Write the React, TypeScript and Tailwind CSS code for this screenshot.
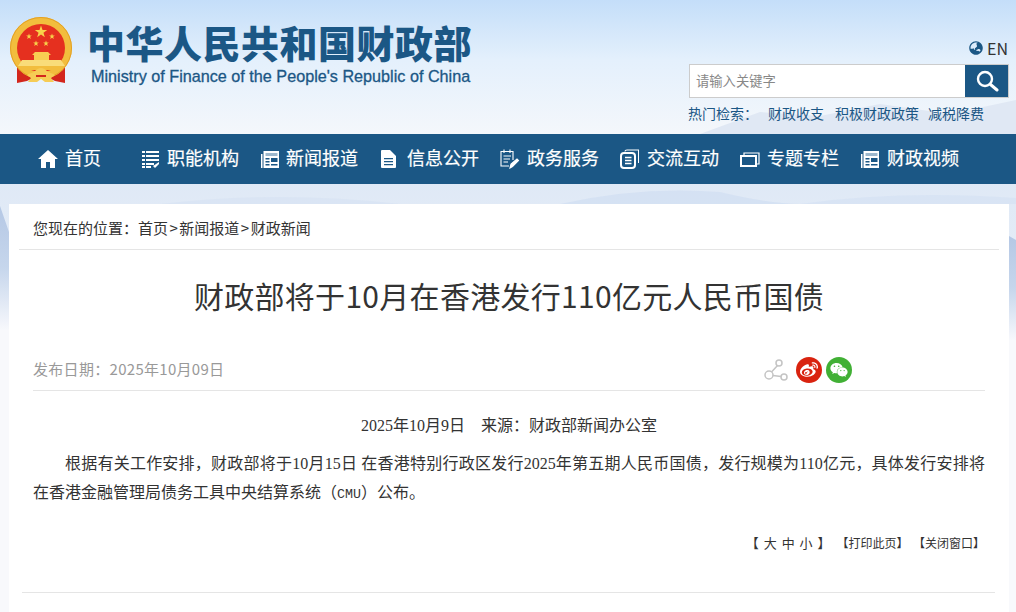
import React from "react";
import { FaWeibo, FaWeixin, FaGlobeAsia } from "react-icons/fa";

const sans = { fontFamily: '"Noto Sans CJK SC", sans-serif' };

const Star = ({ cx, cy, r, fill = "#f8d24a" }: { cx: number; cy: number; r: number; fill?: string }) => {
  const points = Array.from({ length: 10 }, (_, i) => {
    const radius = i % 2 === 0 ? r : r * 0.4;
    const angle = (Math.PI / 5) * i - Math.PI / 2;
    return `${cx + radius * Math.cos(angle)},${cy + radius * Math.sin(angle)}`;
  }).join(" ");
  return <polygon points={points} fill={fill} />;
};

const Emblem = () => (
  <svg width="64" height="68" viewBox="0 0 64 68">
    <path d="M10 44 L8 50 L8 66 L18 64 L26 60 L38 60 L46 64 L56 66 L56 50 L54 44 Z" fill="#d3261c" />
    <circle cx="32" cy="31" r="31" fill="#f2bd3d" />
    <circle cx="32" cy="31" r="30.500" fill="none" stroke="#e3a025" strokeWidth="1" />
    <circle cx="32" cy="31" r="24" fill="#e5301f" />
    <Star cx={32} cy={15} r={6.500} />
    <Star cx={20} cy={19.500} r={3} />
    <Star cx={43} cy={19.500} r={3} />
    <Star cx={27} cy={26.500} r={3} />
    <Star cx={37} cy={26.500} r={3} />
    <path d="M26 35h13l3 3h-2v5h-15v-5h-2z" fill="#f8cf52" />
    <path d="M13 43h39l4 6H9z" fill="#f9dc79" />
    <path d="M9 49h47l-5 4H14z" fill="#f2bd3d" />
    <path d="M18 58c3-2 6-2 8-4 2-2 4-3 6-3s4 1 6 3c2 2 5 2 8 4l-4 3 3 4H36l-4-3-4 3H19l3-4z" fill="#f6cc55" />
    <path d="M27 58h10v2H27z" fill="#d3261c" />
  </svg>
);

const HomeIcon = () => (
  <svg width="20" height="18" viewBox="0 0 20 18" fill="#fff">
    <path d="M10 0 L20 9 L17 9 L17 18 L12 18 L12 12 L8 12 L8 18 L3 18 L3 9 L0 9 Z" />
  </svg>
);

const ListIcon = () => (
  <svg width="17" height="18" viewBox="0 0 17 18" fill="#fff">
    <path d="M0 1h3v2H0zM4 1h13v2H4zM0 5h3v2H0zM4 5h13v2H4zM0 9h3v2H0zM4 9h13v2H4zM0 13h3v2H0zM4 13h8v2H4zM0 16h3v2H0zM4 16h5v2H4zM11 16l6-4v2l-4 4z" />
  </svg>
);

const NewsIcon = () => (
  <svg width="18" height="18" viewBox="0 0 18 18">
    <path d="M0 4h1.500v14H0z" fill="#fff" />
    <path d="M2.500 1H18v17H2.500z" fill="#fff" />
    <path d="M4.500 3h12v3h-12z" fill="#9db8cd" />
    <path d="M4.500 8h4v1.500h-4zM4.500 11h4v1.500h-4zM4.500 14h4v1.500h-4zM10 8h6.500v4H10zM10 14h6.500v1.500H10z" fill="#1b5785" />
  </svg>
);

const DocIcon = () => (
  <svg width="15" height="18" viewBox="0 0 15 18">
    <path d="M1 0h8l6 6v11a1 1 0 0 1-1 1H1a1 1 0 0 1-1-1V1a1 1 0 0 1 1-1z" fill="#fff" />
    <path d="M3 8h9v1.300H3zM3 11h9v1.300H3zM3 14h9v1.300H3z" fill="#1b5785" />
  </svg>
);

const PenIcon = () => (
  <svg width="20" height="20" viewBox="0 0 20 20" fill="none" stroke="#fff" strokeWidth="1.100">
    <path d="M9 17H1V2.500h12V11" />
    <path d="M4 .5v3.500M10 .5v3.500M3.500 7H11M3.500 10H10M3.500 13H8" />
    <path d="M10 19l1-4 6-5 1.500 1.500-6 6z" fill="#fff" />
  </svg>
);

const CopyIcon = () => (
  <svg width="19" height="20" viewBox="0 0 19 20" fill="none" stroke="#fff">
    <path d="M5 2.500 Q5 1 7 1h12" strokeWidth="1.200" />
    <path d="M18.500 1v13" strokeWidth="1" />
    <rect x="1" y="4" width="14" height="15" rx="3" strokeWidth="2" />
    <path d="M5 8.500h6.500M5 11.500h6.500M5 14.500h6.500" strokeWidth="1.300" />
  </svg>
);

const WindowIcon = () => (
  <svg width="20" height="18" viewBox="0 0 20 18" fill="none" stroke="#fff">
    <path d="M4 5V3h15v11h-2" strokeWidth="1.200" />
    <rect x="1" y="6" width="15" height="10" strokeWidth="2" />
  </svg>
);

const navItems = [
  { label: "职能机构", icon: <ListIcon />, cls: "w-[119px] gap-2" },
  { label: "新闻报道", icon: <NewsIcon />, cls: "w-[120px] gap-[7px]" },
  { label: "信息公开", icon: <DocIcon />, cls: "w-[119px] gap-[11px]" },
  { label: "政务服务", icon: <PenIcon />, cls: "w-[120px] gap-[7px]" },
  { label: "交流互动", icon: <CopyIcon />, cls: "w-[120px] gap-2" },
  { label: "专题专栏", icon: <WindowIcon />, cls: "w-[121px] gap-[7px]" },
  { label: "财政视频", icon: <NewsIcon />, cls: "w-[120px] gap-2" },
];

const Background = () => (
  <svg className="absolute inset-0" width="1016" height="612" viewBox="0 0 1016 612" preserveAspectRatio="none">
    <defs>
      <linearGradient id="sky" x1="0" y1="0" x2="0" y2="1">
        <stop offset="0" stopColor="#c4def9" />
        <stop offset="0.45" stopColor="#e4f0fc" />
        <stop offset="1" stopColor="#f4f7fb" />
      </linearGradient>
      <linearGradient id="lower" x1="0" y1="0" x2="0" y2="1">
        <stop offset="0" stopColor="#dce7f5" />
        <stop offset="1" stopColor="#e4ecf7" />
      </linearGradient>
      <linearGradient id="side" x1="0" y1="0" x2="0" y2="1">
        <stop offset="0" stopColor="#b5c8e5" />
        <stop offset="0.5" stopColor="#c6d6ec" />
        <stop offset="1" stopColor="#f7f8fc" />
      </linearGradient>
    </defs>
    <rect width="1016" height="612" fill="#f8f9fc" />
    <rect width="1016" height="134" fill="url(#sky)" />
    <rect y="134" width="1016" height="120" fill="url(#lower)" />
    <path d="M700 134 L760 112 L820 116 L880 104 L950 114 L1016 100 V134 Z" fill="#e0e8f4" />
    <path d="M0 206 L9 232 V330 H0 Z" fill="url(#side)" />
    <path d="M1009 236 L1016 240 V340 H1009 Z" fill="url(#side)" />
    <path d="M560 204 Q640 186 720 192 Q770 204 800 204 Z" fill="#cddcf2" opacity="0.6" />
    <path d="M800 204 Q900 190 1016 198 V204 Z" fill="#cddcf2" opacity="0.4" />
    <path d="M160 204 Q280 190 400 204 Z" fill="#cddcf2" opacity="0.35" />
  </svg>
);

export default function App() {
  return (
    <div className="relative w-[1016px] h-[612px] overflow-hidden" style={sans}>
      <Background />
      <div className="relative">
        <header className="h-[134px] flex justify-between">
          <div className="flex pl-[9px] pt-[17px]">
            <Emblem />
            <div className="pl-[15px]">
              <h1 className="text-[38px] leading-[50px] font-black tracking-[0.5px] text-[#1b5785] whitespace-nowrap -ml-[1px]">
                中华人民共和国财政部
              </h1>
              <p className="pl-[3px] text-[16.2px] leading-[18px] font-['Liberation_Sans',sans-serif] text-[#1b5785] [-webkit-text-stroke:0.3px_#1b5785] whitespace-nowrap">
                Ministry of Finance of the People's Republic of China
              </p>
            </div>
          </div>
          <div className="w-[327px] pt-[38px]">
            <div className="flex justify-end items-center gap-1 pr-[8px] h-[20px]">
              <FaGlobeAsia className="w-[14px] h-[14px] text-[#1b5785]" />
              <span className="text-[16px] text-[#333]">EN</span>
            </div>
            <div className="mt-[6px] flex h-[34px] w-[320px] border border-[#cccccc] bg-white">
              <div className="flex-1 pl-[6px] text-[13.3px] leading-[32px] text-[#888]">请输入关键字</div>
              <div className="w-[43px] bg-[#1b5785] flex items-center justify-center">
                <svg width="24" height="24" viewBox="0 0 24 24" fill="none" stroke="#fff">
                  <circle cx="10" cy="10" r="7" strokeWidth="2.400" />
                  <path d="M15.500 15.500L22 21" strokeWidth="3" strokeLinecap="round" />
                </svg>
              </div>
            </div>
            <div className="mt-[5px] -ml-[1px] flex text-[14px] leading-[20px] text-[#1b5785] whitespace-nowrap">
              <span className="w-[80px]">热门检索：</span>
              <span className="w-[67px]">财政收支</span>
              <span className="w-[93px]">积极财政政策</span>
              <span>减税降费</span>
            </div>
          </div>
        </header>

        <nav className="h-[50px] flex items-center bg-[#1b5785] pl-[38px] text-[18px] text-white whitespace-nowrap [-webkit-text-stroke:0.2px_#fff]">
          <div className="w-[104px] flex items-center gap-[7px]">
            <HomeIcon />
            <span className="pb-[3px]">首页</span>
          </div>
          {navItems.map((item) => (
            <div key={item.label} className={`flex items-center ${item.cls}`}>
              {item.icon}
              <span className="pb-[3px]">{item.label}</span>
            </div>
          ))}
        </nav>

        <main className="mt-[20px] mx-[9px] w-[1000px] h-[408px] bg-white">
          <div className="mx-[10px] h-[46px] pl-[14px] border-b border-[#e5e5e5] text-[15px] leading-[47px] text-[#333]">
            您现在的位置：首页<span className="mx-[1.5px]">&gt;</span>新闻报道<span className="mx-[1.5px]">&gt;</span>财政新闻
          </div>

          <h2 className="pt-[24px] text-center text-[30px] leading-[42px] tracking-[0.3px] text-[#333]">
            财政部将于10月在香港发行110亿元人民币国债
          </h2>

          <div className="mt-[42px] mx-[24px] h-[33px] flex items-start border-b border-[#e5e5e5]">
            <span className="text-[15px] leading-[22px] tracking-[0.3px] text-[#999] w-[731px]">发布日期：2025年10月09日</span>
            <div className="flex items-center gap-[4px] -mt-[1px]">
              <svg width="24" height="24" viewBox="0 0 24 24" fill="none" stroke="#c4c4c4" strokeWidth="1.500">
                <circle cx="5" cy="17" r="4" />
                <circle cx="15" cy="5" r="3" />
                <circle cx="20" cy="19" r="3" />
                <path d="M7.500 14L13.500 7.500M9 17.500L17 18.500" />
              </svg>
              <span className="ml-[4px] w-[26px] h-[26px] rounded-full bg-[#d9230f] flex items-center justify-center">
                <FaWeibo className="w-[18px] h-[18px] text-white" />
              </span>
              <span className="w-[26px] h-[26px] rounded-full bg-[#41b035] flex items-center justify-center">
                <FaWeixin className="w-[18px] h-[18px] text-white" />
              </span>
            </div>
          </div>

          <div className="mx-[24px] font-['Liberation_Serif','Noto_Sans_CJK_SC',serif] text-[16px] text-[#333]">
            <p className="pt-[24px] text-center leading-[22px]">
              2025年10月9日 &nbsp;&nbsp; 来源：财政部新闻办公室
            </p>
            <p className="mt-[12px] leading-[29px]">
              <span className="block indent-[32px] text-justify [text-align-last:justify]">
                根据有关工作安排，财政部将于10月15日 在香港特别行政区发行2025年第五期人民币国债，发行规模为110亿元，具体发行安排将
              </span>
              <span className="block">
                在香港金融管理局债务工具中央结算系统（
                <span className="font-['Liberation_Mono',monospace] text-[13.3px]">CMU</span>
                ）公布。
              </span>
            </p>
          </div>

          <div className="mt-[24px] pr-[24px] flex justify-end items-center text-[#333] whitespace-nowrap">
            <span className="text-[13px] tracking-[1px]">【 大 中 小 】</span>
            <span className="ml-[5px] text-[12px]">【打印此页】</span>
            <span className="ml-[4.500px] text-[12px]">【关闭窗口】</span>
          </div>

          <div className="mt-[39px] mx-[13px] w-[973px] border-b border-[#e5e5e5]" />
        </main>
      </div>
    </div>
  );
}
